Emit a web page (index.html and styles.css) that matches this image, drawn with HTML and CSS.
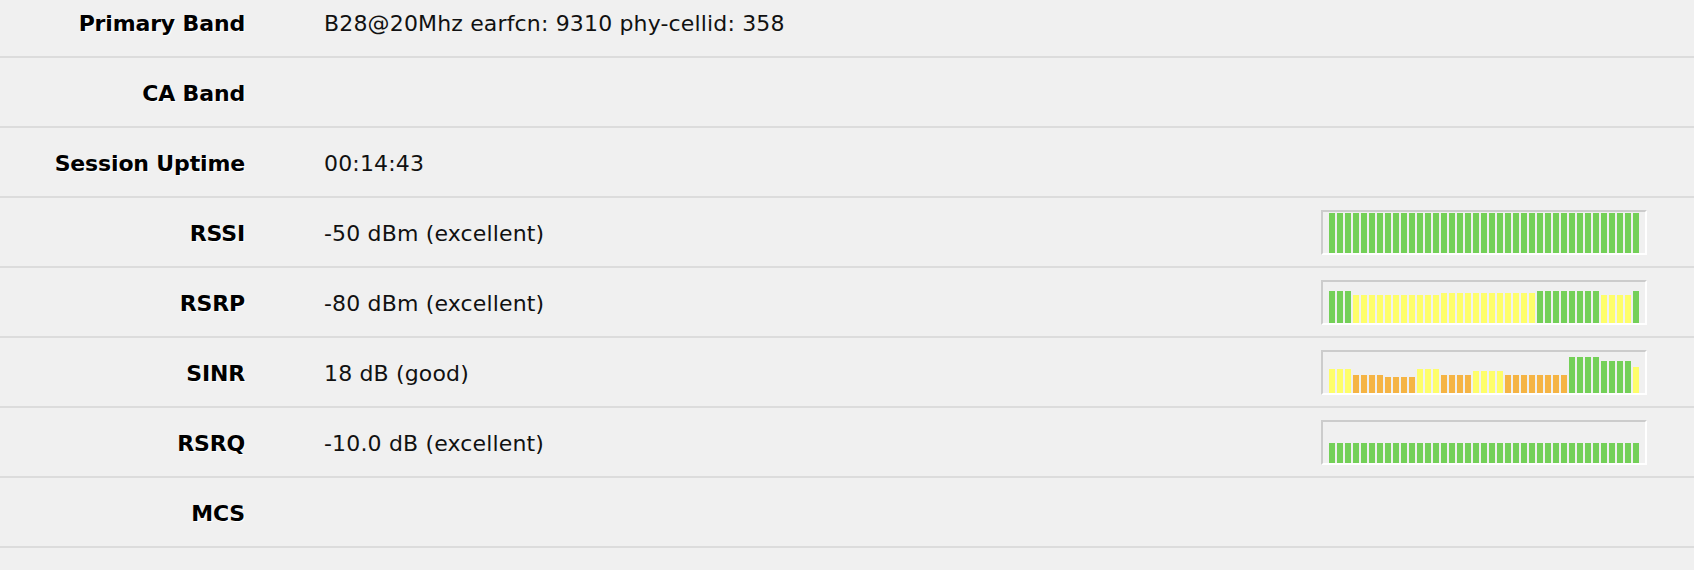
FILE: index.html
```html
<!DOCTYPE html>
<html lang="en">
<head>
<meta charset="utf-8">
<title>LTE Status</title>
<link rel="stylesheet" href="styles.css">
</head>
<body>
<div class="status">
  <div class="row"><div class="label">Primary Band</div><div class="value">B28@20Mhz earfcn: 9310 phy-cellid: 358</div></div>
  <div class="row"><div class="label">CA Band</div><div class="value"></div></div>
  <div class="row"><div class="label">Session Uptime</div><div class="value">00:14:43</div></div>
  <div class="row"><div class="label">RSSI</div><div class="value">-50 dBm (excellent)</div><div class="graph" id="g-rssi"></div></div>
  <div class="row"><div class="label">RSRP</div><div class="value">-80 dBm (excellent)</div><div class="graph" id="g-rsrp"></div></div>
  <div class="row"><div class="label">SINR</div><div class="value">18 dB (good)</div><div class="graph" id="g-sinr"></div></div>
  <div class="row"><div class="label">RSRQ</div><div class="value">-10.0 dB (excellent)</div><div class="graph" id="g-rsrq"></div></div>
  <div class="row"><div class="label">MCS</div><div class="value"></div></div>
</div>
<script src="app.js"></script>
</body>
</html>
```

FILE: styles.css
```css
html, body {
  margin: 0;
  padding: 0;
  background: #f0f0f0;
}

body {
  font-family: "DejaVu Sans", Verdana, sans-serif;
  font-size: 22px;
  color: #000;
  height: 570px;
  overflow: hidden;
}

.status {
  margin-top: -12px;
}

.row {
  display: grid;
  grid-template-columns: 245px 1fr auto;
  column-gap: 79px;
  align-items: center;
  height: 68px;
  padding-right: 47px;
  border-bottom: 2px solid #dcdcdc;
}

.label,
.value {
  padding-top: 2px;
}

.label {
  font-weight: bold;
  text-align: right;
  letter-spacing: -0.15px;
  text-shadow: 1px 1px 0 #fff;
}

.value {
  color: #111;
  white-space: nowrap;
  letter-spacing: 0.16px;
}

.graph {
  display: flex;
  align-items: flex-end;
  gap: 2px;
  width: 310px;
  height: 41px;
  padding: 0 6px;
  border: 2px solid;
  border-color: #cccccc #ffffff #ffffff #cccccc;
  background: #f0f0f0;
}

.bar {
  width: 6px;
  flex: none;
}

.bar.g { background: #74d058; }
.bar.y { background: #fefe6a; }
.bar.o { background: #f5b444; }
```

FILE: app.js
```js
// Signal history: [colour class, height in px, bar count] runs, oldest first
const series = {
  'g-rssi': [['g', 40, 39]],
  'g-rsrp': [['g', 32, 3], ['y', 28, 11], ['y', 30, 12], ['g', 32, 8], ['y', 28, 4], ['g', 32, 1]],
  'g-sinr': [['y', 24, 3], ['o', 18, 4], ['o', 16, 4], ['y', 24, 3], ['o', 18, 4], ['y', 22, 4],
             ['o', 18, 8], ['g', 36, 4], ['g', 32, 4], ['y', 26, 1]],
  'g-rsrq': [['g', 20, 39]]
};

for (const [id, runs] of Object.entries(series)) {
  const graph = document.getElementById(id);
  for (const [cls, h, n] of runs) {
    for (let i = 0; i < n; i++) {
      const bar = document.createElement('div');
      bar.className = 'bar ' + cls;
      bar.style.height = h + 'px';
      graph.appendChild(bar);
    }
  }
}
```
